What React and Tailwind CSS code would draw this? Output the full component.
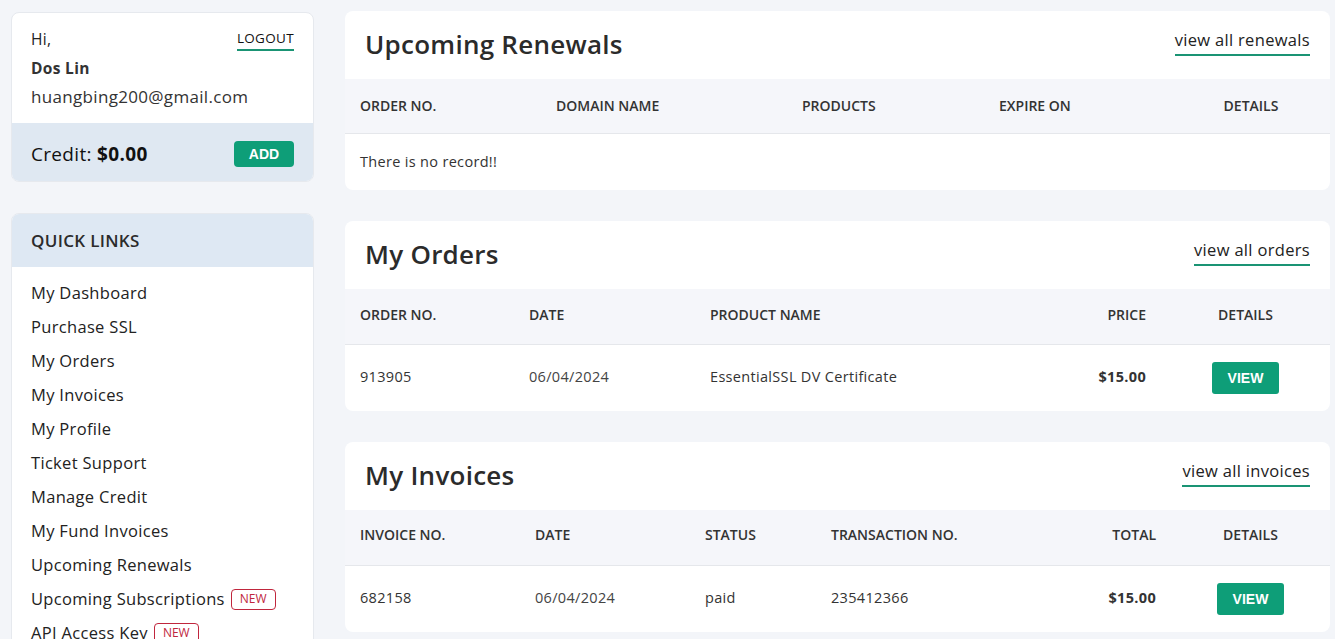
import React from 'react';

const font = { fontFamily: '"Open Sans", "Noto Sans", sans-serif' };

const links = [
  'My Dashboard',
  'Purchase SSL',
  'My Orders',
  'My Invoices',
  'My Profile',
  'Ticket Support',
  'Manage Credit',
  'My Fund Invoices',
  'Upcoming Renewals',
  'Upcoming Subscriptions',
  'API Access Key',
];

function NewBadge() {
  return (
    <span className="ml-[6px] inline-flex h-[21px] items-center rounded-[4px] border border-[#c0263d] px-[8px] text-[12px] leading-none tracking-normal text-[#c0263d]">
      NEW
    </span>
  );
}

function ViewButton() {
  return (
    <button className="h-[32px] w-[67px] rounded-[3px] bg-[#0e9e78] text-[14px] font-bold tracking-normal text-white [font-family:'Liberation_Sans',Arial,sans-serif]">
      VIEW
    </button>
  );
}

function Card({ title, linkText, children }) {
  return (
    <div className="overflow-hidden rounded-[8px] bg-white">
      <div className="flex h-[68px] items-center justify-between pl-[20px] pr-[20px]">
        <h2 className="-mt-[2px] text-[26px] font-semibold tracking-[0.01em] text-[#2b2b2b]">{title}</h2>
        <a className="-mt-[6px] border-b-2 border-[#1a9474] pb-[2px] text-[16.5px] text-[#222]">{linkText}</a>
      </div>
      {children}
    </div>
  );
}

export default function App() {
  return (
    <div style={font} className="flex min-h-[639px] gap-[31px] bg-[#f3f5f9] pl-[11px] pt-[11px] tracking-[0.02em] text-[#222]">
      <aside className="w-[303px] shrink-0 pt-[1px]">
        <div className="overflow-hidden rounded-[8px] border border-[#e6e9ee] bg-white">
          <div className="px-[19px] pb-[14px] pt-[15px]">
            <div className="flex items-start justify-between">
              <span className="text-[15.5px] leading-[22px]">Hi,</span>
              <a className="border-b-2 border-[#1a9474] pb-[1px] text-[13.5px] font-medium leading-[20px] text-[#111]">LOGOUT</a>
            </div>
            <div className="mt-[5px] text-[15.5px] font-bold leading-[24px] text-[#333]">Dos Lin</div>
            <div className="mt-[5px] text-[17px] leading-[24px] text-[#333]">huangbing200@gmail.com</div>
          </div>
          <div className="flex h-[58px] items-center justify-between bg-[#dfe8f2] px-[19px] pt-[4px]">
            <span className="text-[19px] text-[#111]">
              Credit: <b className="font-bold">$0.00</b>
            </span>
            <button className="h-[26px] w-[60px] rounded-[4px] bg-[#0e9e78] text-[14px] font-bold tracking-normal text-white [font-family:'Liberation_Sans',Arial,sans-serif]">
              ADD
            </button>
          </div>
        </div>

        <div className="mt-[31px] overflow-hidden rounded-t-[8px] border border-[#e6e9ee] bg-white">
          <div className="flex h-[53px] items-center bg-[#dee8f3] px-[19px] text-[17px] font-semibold text-[#2b2b2b]">
            QUICK LINKS
          </div>
          <ul className="px-[19px] pt-[9px]">
            {links.map((l) => (
              <li key={l} className="flex h-[34px] items-center text-[16.5px] text-[#222]">
                {l}
                {(l === 'Upcoming Subscriptions' || l === 'API Access Key') && <NewBadge />}
              </li>
            ))}
          </ul>
        </div>
      </aside>

      <main className="flex w-[985px] flex-col gap-[31px]">
        <Card title="Upcoming Renewals" linkText="view all renewals">
          <div className="grid h-[55px] grid-cols-[196px_246px_197px_188px_1fr] items-center border-b border-[#e5e7eb] bg-[#f5f6fa] pb-[2px] text-[14px] font-semibold tracking-normal text-[#333]">
            <div className="pl-[15px]">ORDER NO.</div>
            <div className="pl-[15px]">DOMAIN NAME</div>
            <div className="pl-[15px]">PRODUCTS</div>
            <div className="pl-[15px]">EXPIRE ON</div>
            <div className="text-center">DETAILS</div>
          </div>
          <div className="flex h-[56px] items-center pl-[15px] text-[14.5px] text-[#333]">There is no record!!</div>
        </Card>

        <Card title="My Orders" linkText="view all orders">
          <div className="grid h-[56px] grid-cols-[169px_181px_345px_121px_1fr] items-center border-b border-[#e5e7eb] bg-[#f5f6fa] pb-[5px] text-[14px] font-semibold tracking-normal text-[#333]">
            <div className="pl-[15px]">ORDER NO.</div>
            <div className="pl-[15px]">DATE</div>
            <div className="pl-[15px]">PRODUCT NAME</div>
            <div className="pr-[15px] text-right">PRICE</div>
            <div className="text-center">DETAILS</div>
          </div>
          <div className="grid h-[66px] grid-cols-[169px_181px_345px_121px_1fr] items-center text-[14.5px] text-[#333]">
            <div className="-mt-[3px] pl-[15px]">913905</div>
            <div className="-mt-[3px] pl-[15px] text-[#444]">06/04/2024</div>
            <div className="-mt-[3px] pl-[15px]">EssentialSSL DV Certificate</div>
            <div className="-mt-[3px] pr-[15px] text-right font-bold">$15.00</div>
            <div className="flex justify-center">
              <ViewButton />
            </div>
          </div>
        </Card>

        <Card title="My Invoices" linkText="view all invoices">
          <div className="grid h-[56px] grid-cols-[175px_170px_126px_355px_1fr] items-center border-b border-[#e5e7eb] bg-[#f5f6fa] pb-[6px] text-[14px] font-semibold tracking-normal text-[#333]">
            <div className="pl-[15px]">INVOICE NO.</div>
            <div className="pl-[15px]">DATE</div>
            <div className="pl-[15px]">STATUS</div>
            <div className="flex justify-between pl-[15px] pr-[15px]">
              <span>TRANSACTION NO.</span>
              <span>TOTAL</span>
            </div>
            <div className="text-center">DETAILS</div>
          </div>
          <div className="grid h-[66px] grid-cols-[175px_170px_126px_355px_1fr] items-center text-[14.5px] text-[#333]">
            <div className="-mt-[3px] pl-[15px]">682158</div>
            <div className="-mt-[3px] pl-[15px] text-[#444]">06/04/2024</div>
            <div className="-mt-[3px] pl-[15px]">paid</div>
            <div className="-mt-[3px] flex justify-between pl-[15px] pr-[15px]">
              <span>235412366</span>
              <span className="font-bold">$15.00</span>
            </div>
            <div className="flex justify-center">
              <ViewButton />
            </div>
          </div>
        </Card>
      </main>
    </div>
  );
}
